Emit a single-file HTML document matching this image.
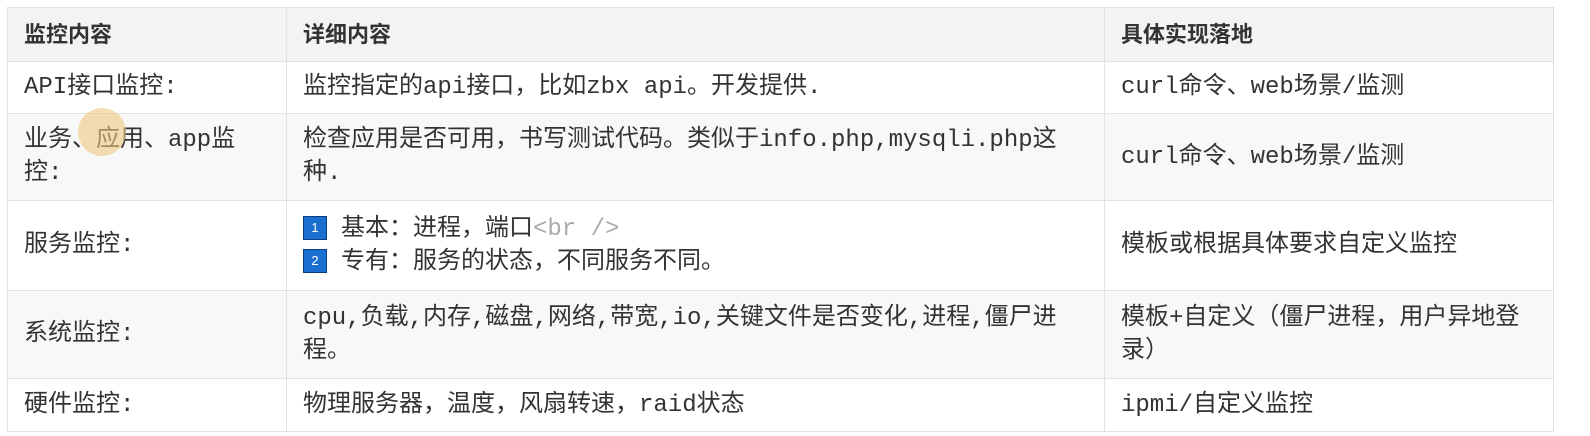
<!DOCTYPE html>
<html><head><meta charset="utf-8"><style>
body{margin:0;background:#fff;width:1590px;height:436px;overflow:hidden}
table{position:absolute;left:7px;top:7px;border-collapse:collapse;table-layout:fixed;width:1546px;font-family:"Liberation Mono","Noto Sans CJK SC",monospace;font-size:24px;color:#333}
td,th{border:1.5px solid #e2e2e2;padding:0 16px;text-align:left;vertical-align:middle;line-height:33px;box-sizing:border-box}
th{font-family:"Liberation Sans","Noto Sans CJK SC",sans-serif;font-weight:bold;background:#f3f3f3;height:54px;font-size:22px}
tr.g td{background:#f8f8f8}
.n{display:inline-block;width:22px;height:22px;background:#1a6fd0;border:1px solid #0a3d80;color:#fff;font-size:13px;line-height:22px;text-align:center;vertical-align:middle;margin-right:14px;font-family:"Liberation Sans",sans-serif}
.gr{color:#aaa}
.dot{position:absolute;left:78px;top:108px;width:48px;height:48px;border-radius:50%;background:rgba(240,200,130,.6)}
</style></head><body>
<table>
<colgroup><col style="width:279px"><col style="width:818px"><col style="width:449px"></colgroup>
<tr><th>监控内容</th><th>详细内容</th><th>具体实现落地</th></tr>
<tr style="height:52px"><td>API接口监控:</td><td>监控指定的api接口，比如zbx api。开发提供.</td><td>curl命令、web场景/监测</td></tr>
<tr class="g" style="height:87px"><td>业务、应用、app监控:</td><td>检查应用是否可用，书写测试代码。类似于info.php,mysqli.php这种.</td><td>curl命令、web场景/监测</td></tr>
<tr style="height:90px"><td>服务监控:</td><td><span class="n">1</span>基本：进程，端口<span class="gr">&lt;br /&gt;</span><br><span class="n">2</span>专有：服务的状态，不同服务不同。</td><td>模板或根据具体要求自定义监控</td></tr>
<tr class="g" style="height:88px"><td>系统监控:</td><td>cpu,负载,内存,磁盘,网络,带宽,io,关键文件是否变化,进程,僵尸进程。</td><td>模板+自定义（僵尸进程，用户异地登录）</td></tr>
<tr style="height:53px"><td>硬件监控:</td><td>物理服务器，温度，风扇转速，raid状态</td><td>ipmi/自定义监控</td></tr>
</table>
<div class="dot"></div>
</body></html>
